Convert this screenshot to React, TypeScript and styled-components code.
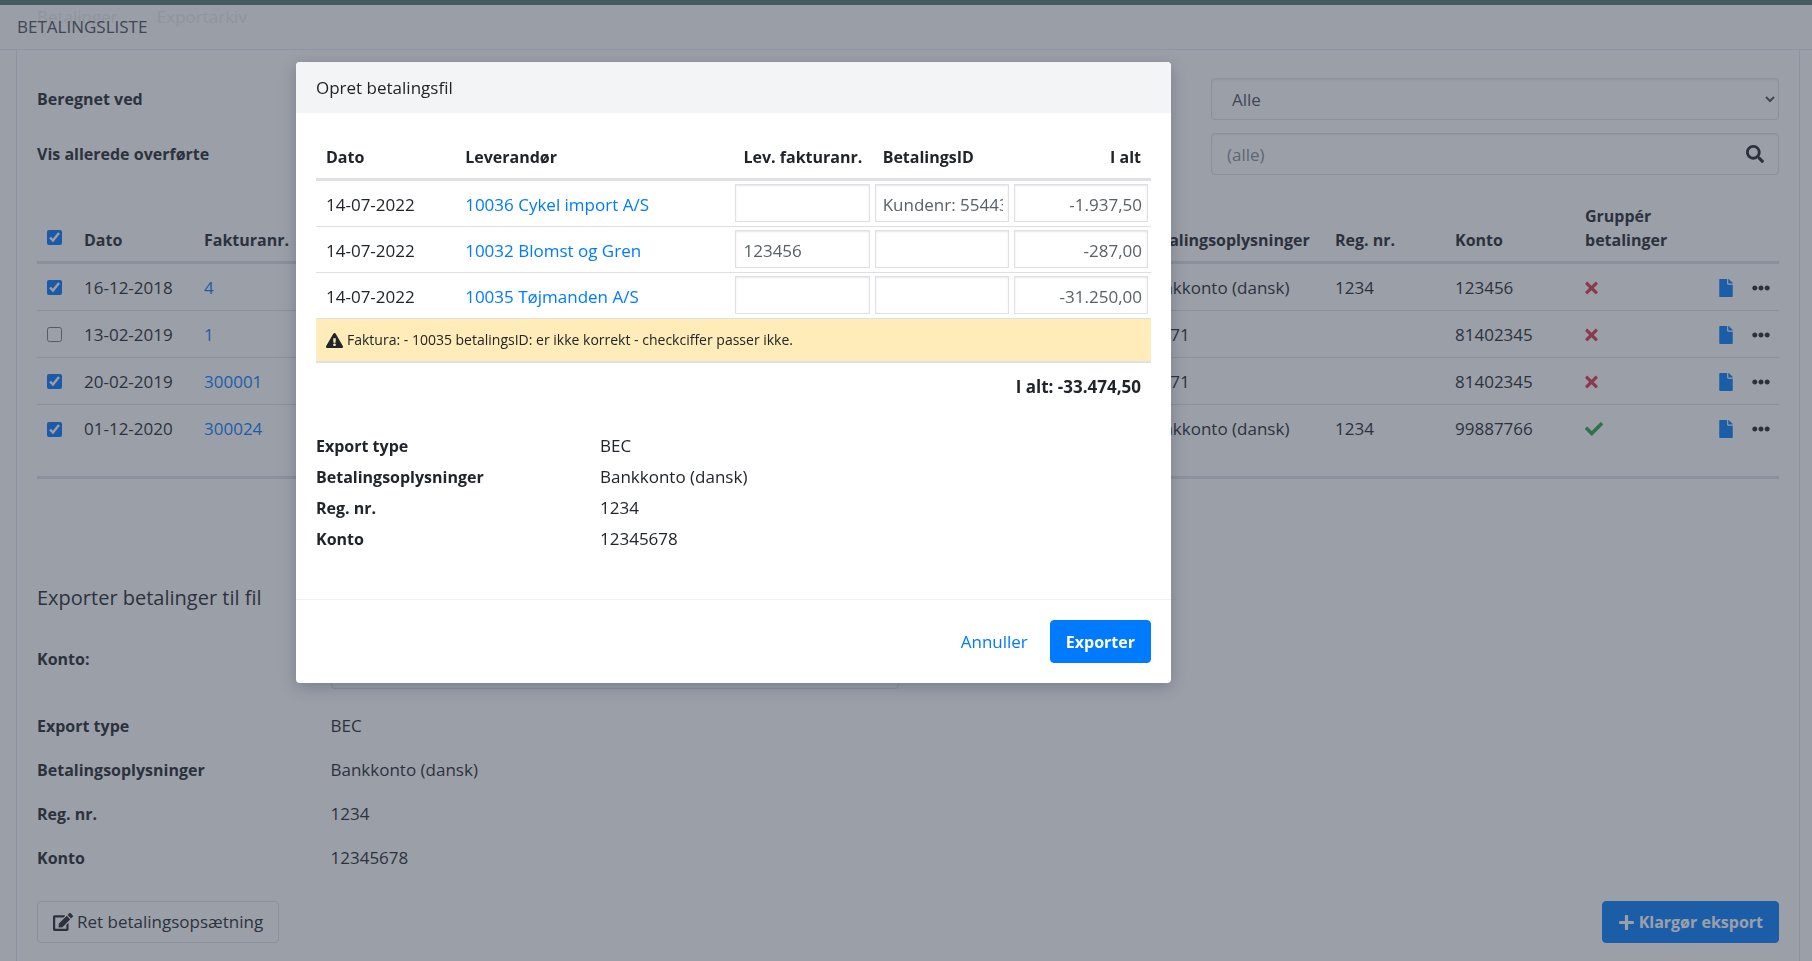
import React from "react";
import styled, { createGlobalStyle } from "styled-components";
import {
  FaCheck,
  FaEdit,
  FaEllipsisH,
  FaExclamationTriangle,
  FaFile,
  FaPlus,
  FaSearch,
  FaTimes,
} from "react-icons/fa";

const GlobalStyle = createGlobalStyle`
  *, *::before, *::after { box-sizing: border-box; }
  body {
    margin: 0;
    overflow: hidden;
    background: #fff;
    color: #212529;
    font-family: "Segoe UI", "Open Sans", "Noto Sans", sans-serif;
    font-size: 17px;
    line-height: 24px;
  }
  button, input, select { font: inherit; }
  a { color: #007bff; text-decoration: none; }
`;

/* ---------- page frame ---------- */

const Page = styled.div`
  display: flex;
  flex-direction: column;
  min-height: 100vh;
  border-top: 5px solid #50796f;
`;

const TitleBar = styled.header`
  position: absolute;
  top: 5px;
  left: 0;
  right: 0;
  padding: 10px 17px;
  border-bottom: 1px solid #e3e6f3;
  background: rgba(251, 252, 253, 0.9);
`;

const PageTitle = styled.h1`
  margin: 0;
  color: #484c54;
  font-size: 17px;
  font-weight: 500;
  line-height: 24px;
  text-transform: uppercase;
`;

const Tabs = styled.nav`
  display: flex;
  gap: 39px;
  padding: 0 37px 20px;
`;

const TabLink = styled.a`
  color: #343a40;
`;

const Card = styled.main`
  flex: 1;
  margin: 0 12px 0 16px;
  padding: 29px 20px 18px;
  border: solid #e3e6f3;
  border-width: 0 1px;
`;

const FormGrid = styled.div<{ $gap: number }>`
  display: grid;
  grid-template-columns: repeat(6, minmax(0, 1fr));
  gap: ${(p) => p.$gap}px 19px;
`;

const FieldLabel = styled.label`
  grid-column-start: 1;
  padding-top: 9px;
  font-size: 16px;
  font-weight: 700;
  white-space: nowrap;
`;

const FieldBox = styled.div<{ $start: number }>`
  grid-column: ${(p) => p.$start} / span 2;
  display: flex;
  align-items: center;
  height: 42px;
  border: 1px solid #dee0e3;
  border-radius: 4px;
  box-shadow: inset 0 1px 2px rgba(0, 0, 0, 0.08);
`;

const Select = styled.select`
  width: 100%;
  height: 40px;
  padding: 0 0 0 16px;
  border: 0;
  border-radius: 4px;
  background: transparent;
  color: #495057;
`;

const SearchInput = styled.input`
  flex: 1;
  min-width: 0;
  height: 40px;
  padding: 0 15px;
  border: 0;
  background: transparent;
  color: #495057;
  &::placeholder { color: #868e96; opacity: 1; }
`;

const IconButton = styled.button<{ $color?: string; $width?: number }>`
  display: inline-flex;
  padding: 0;
  border: 0;
  background: none;
  color: ${(p) => p.$color ?? "#212529"};
  font-size: 18px;
  svg { width: ${(p) => p.$width ?? 18}px; }
`;

const SearchButton = styled(IconButton)`
  margin-right: 14px;
`;

/* ---------- payment list ---------- */

const PaymentTable = styled.table`
  width: 100%;
  margin-top: 20px;
  border-collapse: separate;
  border-spacing: 0;
  table-layout: fixed;
`;

const HeadCell = styled.th`
  height: 69px;
  padding: 0 0 9px 10px;
  border-bottom: 3px solid #dee2e6;
  font-size: 16px;
  font-weight: 700;
  text-align: left;
  vertical-align: bottom;
`;

const Cell = styled.td<{ $last?: boolean }>`
  height: 47px;
  padding: 1px 0 0 10px;
  border-bottom: ${(p) => (p.$last ? 0 : 1)}px solid #dee2e6;
  white-space: nowrap;
  svg { display: block; }
`;

const FootCell = styled.td`
  height: 27px;
  border-bottom: 3px solid #dee2e6;
`;

const CheckBox = styled.input`
  display: block;
  width: 15px;
  height: 15px;
  margin: 0;
  th > & { margin-bottom: 7px; }
`;

const RowActions = styled.div`
  display: flex;
  align-items: center;
  justify-content: flex-end;
  gap: 19px;
  padding-right: 9px;
`;

const Mark = styled.span<{ $ok: boolean }>`
  display: block;
  color: ${(p) => (p.$ok ? "#28a745" : "#dc3545")};
  font-size: 18px;
  svg { width: ${(p) => (p.$ok ? 18 : 13)}px; }
`;

/* ---------- export section ---------- */

const SectionTitle = styled.h2`
  margin: 104px 0 34px;
  font-size: 20px;
  font-weight: 500;
  line-height: 30px;
`;

const ExportLabel = styled.label`
  font-size: 16px;
  font-weight: 700;
`;

const Facts = styled.dl<{ $page?: boolean }>`
  display: grid;
  grid-template-columns: ${(p) => (p.$page ? "repeat(6, minmax(0, 1fr))" : "284px 1fr")};
  gap: ${(p) => (p.$page ? "20px 19px" : "7px 0")};
  margin: ${(p) => (p.$page ? "25px 0 31px" : "23px 0 0")};
  dt {
    grid-column-start: 1;
    font-size: 16px;
    font-weight: 700;
    white-space: nowrap;
  }
  dd { margin: 0; white-space: nowrap; }
`;

const ButtonRow = styled.div`
  display: flex;
  justify-content: space-between;
`;

const Button = styled.button<{ $kind: "outline" | "primary" | "link" }>`
  display: inline-flex;
  align-items: center;
  gap: 4px;
  height: 42px;
  padding: 0 15px;
  border: 1px solid
    ${(p) => ({ outline: "#dee0e3", primary: "#007bff", link: "transparent" })[p.$kind]};
  border-radius: 4px;
  background: ${(p) => (p.$kind === "primary" ? "#007bff" : "transparent")};
  color: ${(p) => ({ outline: "#212529", primary: "#fff", link: "#007bff" })[p.$kind]};
  font-size: ${(p) => (p.$kind === "primary" ? 16 : 17)}px;
  font-weight: ${(p) => ({ outline: 500, primary: 700, link: 400 })[p.$kind]};
`;

/* ---------- dialog ---------- */

const Backdrop = styled.div`
  position: fixed;
  inset: 0;
  padding: 62px 16px 0 296px;
  background: rgba(56, 63, 81, 0.5);
`;

const Dialog = styled.section`
  max-width: 875px;
  border-radius: 4px;
  overflow: hidden;
  background: #fff;
  box-shadow: 0 4px 16px rgba(20, 26, 50, 0.25);
`;

const DialogTitle = styled.h2`
  margin: 0;
  padding: 14px 20px 13px;
  background: #f2f4f6;
  font-size: 17px;
  font-weight: 400;
  line-height: 24px;
`;

const DialogBody = styled.div`
  padding: 20px 20px 48px;
`;

const DialogFooter = styled.footer`
  display: flex;
  justify-content: flex-end;
  gap: 6px;
  padding: 20px;
  border-top: 1px solid #f0f1f3;
  ${Button} { height: 43px; }
`;

const LineTable = styled.table`
  width: 100%;
  border-collapse: separate;
  border-spacing: 0;
  table-layout: fixed;
`;

const LineHead = styled.th<{ $right?: boolean }>`
  height: 48px;
  padding: 3px 10px 0;
  border-bottom: 3px solid #dee0e2;
  font-size: 16px;
  font-weight: 700;
  text-align: ${(p) => (p.$right ? "right" : "left")};
  white-space: nowrap;
`;

const LineCell = styled.td<{ $tight?: boolean }>`
  height: 46px;
  padding: ${(p) => (p.$tight ? "0 3px 2px 2px" : "2px 10px 0")};
  border-bottom: 1px solid #dee0e2;
  white-space: nowrap;
`;

const LineInput = styled.input<{ $right?: boolean }>`
  display: block;
  width: 100%;
  height: 38px;
  padding: 3px 5px 0 7px;
  border: 1px solid #dee0e3;
  background: #fff;
  box-shadow: inset 0 1px 2px rgba(0, 0, 0, 0.1);
  color: #5b6067;
  text-align: ${(p) => (p.$right ? "right" : "left")};
`;

const WarningCell = styled.td`
  height: 44px;
  padding: 0 10px;
  border-bottom: 2px solid #dee0e2;
  background: #ffecb8;
  font-size: 14px;
`;

const Warning = styled.div`
  display: flex;
  align-items: center;
  gap: 4px;
  svg { font-size: 17px; }
`;

const TotalCell = styled.td`
  height: 48px;
  padding: 0 10px;
  font-weight: 700;
  text-align: right;
`;

/* ---------- data ---------- */

const payments = [
  { date: "16-12-2018", invoice: "4", info: "Bankkonto (dansk)", reg: "1234", account: "123456", grouped: false, picked: true },
  { date: "13-02-2019", invoice: "1", info: "FIK 71", reg: "", account: "81402345", grouped: false, picked: false },
  { date: "20-02-2019", invoice: "300001", info: "FIK 71", reg: "", account: "81402345", grouped: false, picked: true },
  { date: "01-12-2020", invoice: "300024", info: "Bankkonto (dansk)", reg: "1234", account: "99887766", grouped: true, picked: true },
];

const lines = [
  { date: "14-07-2022", supplier: "10036 Cykel import A/S", invoice: "", paymentId: "Kundenr: 55443", total: "-1.937,50" },
  { date: "14-07-2022", supplier: "10032 Blomst og Gren", invoice: "123456", paymentId: "", total: "-287,00" },
  { date: "14-07-2022", supplier: "10035 Tøjmanden A/S", invoice: "", paymentId: "", total: "-31.250,00" },
];

const accountFacts = [
  ["Export type", "BEC"],
  ["Betalingsoplysninger", "Bankkonto (dansk)"],
  ["Reg. nr.", "1234"],
  ["Konto", "12345678"],
];

function AccountFacts({ page }: { page?: boolean }) {
  return (
    <Facts $page={page}>
      {accountFacts.map(([name, value]) => (
        <React.Fragment key={name}>
          <dt>{name}</dt>
          <dd>{value}</dd>
        </React.Fragment>
      ))}
    </Facts>
  );
}

const Column = styled.col<{ $width?: string }>`
  width: ${(p) => p.$width ?? "auto"};
`;

function PaymentList() {
  return (
    <PaymentTable>
      <colgroup>
        <Column $width="37px" />
        <Column $width="120px" />
        <Column />
        <Column $width="193px" />
        <Column $width="120px" />
        <Column $width="130px" />
        <Column $width="120px" />
        <Column $width="84px" />
      </colgroup>
      <thead>
        <tr>
          <HeadCell>
            <CheckBox type="checkbox" aria-label="Vælg alle" defaultChecked />
          </HeadCell>
          <HeadCell>Dato</HeadCell>
          <HeadCell>Fakturanr.</HeadCell>
          <HeadCell>Betalingsoplysninger</HeadCell>
          <HeadCell>Reg. nr.</HeadCell>
          <HeadCell>Konto</HeadCell>
          <HeadCell>Gruppér betalinger</HeadCell>
          <HeadCell />
        </tr>
      </thead>
      <tbody>
        {payments.map((p, i) => {
          const last = i === payments.length - 1;
          return (
            <tr key={p.date}>
              <Cell $last={last}>
                <CheckBox type="checkbox" aria-label={p.date} defaultChecked={p.picked} />
              </Cell>
              <Cell $last={last}>{p.date}</Cell>
              <Cell $last={last}><a href="#faktura">{p.invoice}</a></Cell>
              <Cell $last={last}>{p.info}</Cell>
              <Cell $last={last}>{p.reg}</Cell>
              <Cell $last={last}>{p.account}</Cell>
              <Cell $last={last}>
                <Mark $ok={p.grouped}>{p.grouped ? <FaCheck /> : <FaTimes />}</Mark>
              </Cell>
              <Cell $last={last}>
                <RowActions>
                  <IconButton type="button" $color="#007bff" $width={14} aria-label="Bilag"><FaFile /></IconButton>
                  <IconButton type="button" aria-label="Mere"><FaEllipsisH /></IconButton>
                </RowActions>
              </Cell>
            </tr>
          );
        })}
      </tbody>
      <tfoot>
        <tr><FootCell colSpan={8} /></tr>
      </tfoot>
    </PaymentTable>
  );
}

function ExportDialog() {
  return (
    <Backdrop>
      <Dialog role="dialog" aria-modal="true" aria-labelledby="dialog-title">
        <DialogTitle id="dialog-title">Opret betalingsfil</DialogTitle>
        <DialogBody>
          <LineTable>
            <colgroup>
              <Column />
              <Column $width="calc(100% / 3)" />
              <Column />
              <Column />
              <Column />
            </colgroup>
            <thead>
              <tr>
                <LineHead>Dato</LineHead>
                <LineHead>Leverandør</LineHead>
                <LineHead>Lev. fakturanr.</LineHead>
                <LineHead>BetalingsID</LineHead>
                <LineHead $right>I alt</LineHead>
              </tr>
            </thead>
            <tbody>
              {lines.map((l) => (
                <tr key={l.supplier}>
                  <LineCell>{l.date}</LineCell>
                  <LineCell><a href="#leverandor">{l.supplier}</a></LineCell>
                  <LineCell $tight><LineInput aria-label="Lev. fakturanr." defaultValue={l.invoice} /></LineCell>
                  <LineCell $tight><LineInput aria-label="BetalingsID" defaultValue={l.paymentId} /></LineCell>
                  <LineCell $tight><LineInput $right aria-label="I alt" defaultValue={l.total} /></LineCell>
                </tr>
              ))}
              <tr>
                <WarningCell colSpan={5}>
                  <Warning>
                    <FaExclamationTriangle />
                    Faktura: - 10035 betalingsID: er ikke korrekt - checkciffer passer ikke.
                  </Warning>
                </WarningCell>
              </tr>
            </tbody>
            <tfoot>
              <tr><TotalCell colSpan={5}>I alt: -33.474,50</TotalCell></tr>
            </tfoot>
          </LineTable>
          <AccountFacts />
        </DialogBody>
        <DialogFooter>
          <Button type="button" $kind="link">Annuller</Button>
          <Button type="button" $kind="primary">Exporter</Button>
        </DialogFooter>
      </Dialog>
    </Backdrop>
  );
}

export default function App() {
  return (
    <>
      <GlobalStyle />
      <Page>
        <Tabs>
          <TabLink href="#betalinger">Betalinger</TabLink>
          <TabLink href="#exportarkiv">Exportarkiv</TabLink>
        </Tabs>
        <TitleBar><PageTitle>Betalingsliste</PageTitle></TitleBar>
        <Card>
          <FormGrid $gap={13}>
            <FieldLabel htmlFor="calculated">Beregnet ved</FieldLabel>
            <FieldBox $start={5}>
              <Select id="calculated"><option>Alle</option></Select>
            </FieldBox>
            <FieldLabel htmlFor="transferred">Vis allerede overførte</FieldLabel>
            <FieldBox $start={5}>
              <SearchInput id="transferred" placeholder="(alle)" />
              <SearchButton type="button" aria-label="Søg"><FaSearch /></SearchButton>
            </FieldBox>
          </FormGrid>
          <PaymentList />
          <SectionTitle>Exporter betalinger til fil</SectionTitle>
          <FormGrid $gap={0}>
            <ExportLabel htmlFor="account">Konto:</ExportLabel>
            <FieldBox $start={2}>
              <Select id="account"><option>12345678</option></Select>
            </FieldBox>
          </FormGrid>
          <AccountFacts page />
          <ButtonRow>
            <Button type="button" $kind="outline"><FaEdit size={20} />Ret betalingsopsætning</Button>
            <Button type="button" $kind="primary"><FaPlus size={17} />Klargør eksport</Button>
          </ButtonRow>
        </Card>
      </Page>
      <ExportDialog />
    </>
  );
}
